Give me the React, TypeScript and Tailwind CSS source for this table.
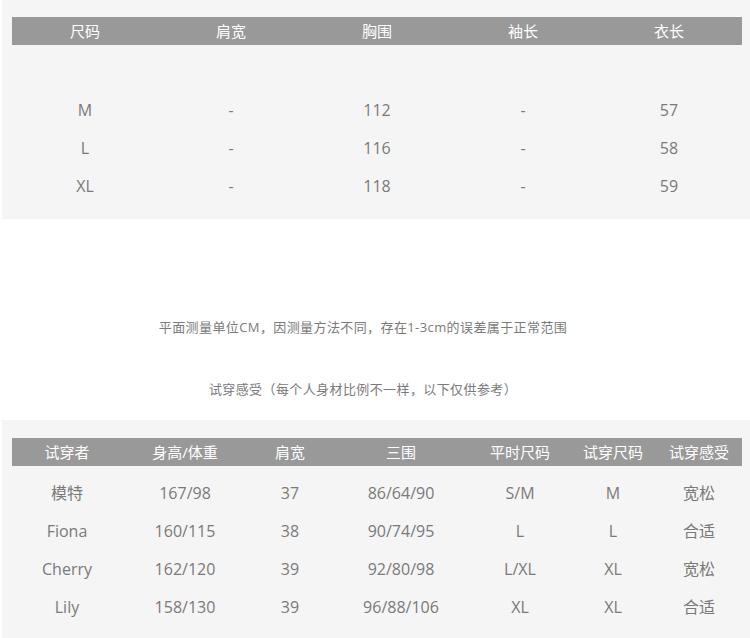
import React from 'react';

const sizeHead = ['尺码', '肩宽', '胸围', '袖长', '衣长'];
const sizeRows = [
  ['M', '-', '112', '-', '57'],
  ['L', '-', '116', '-', '58'],
  ['XL', '-', '118', '-', '59'],
];

const tryHead = ['试穿者', '身高/体重', '肩宽', '三围', '平时尺码', '试穿尺码', '试穿感受'];
const tryRows = [
  ['模特', '167/98', '37', '86/64/90', 'S/M', 'M', '宽松'],
  ['Fiona', '160/115', '38', '90/74/95', 'L', 'L', '合适'],
  ['Cherry', '162/120', '39', '92/80/98', 'L/XL', 'XL', '宽松'],
  ['Lily', '158/130', '39', '96/88/106', 'XL', 'XL', '合适'],
];

const tryCols = 'grid grid-cols-[110px_126px_84px_138px_100px_86px_86px]';

const App: React.FC = () => {
  return (
    <div className="w-[750px] h-[638px] overflow-hidden bg-white font-['Open_Sans','Noto_Sans_CJK_SC',sans-serif]">
      {/* size chart */}
      <div className="ml-[2px] bg-[#f5f5f5] pl-[10px] pr-[8px] pt-[17px] pb-[14px]">
        <div className="grid grid-cols-5 h-[28px] bg-[#999999] text-white text-[15px] items-center text-center">
          {sizeHead.map((h) => (
            <div key={h}>{h}</div>
          ))}
        </div>
        <div className="h-[46px]" />
        {sizeRows.map((row, i) => (
          <div key={i} className="grid grid-cols-5 h-[38px] items-center text-center text-[16px] text-[#7a7a7a]">
            {row.map((c, j) => (
              <div key={j}>{c}</div>
            ))}
          </div>
        ))}
      </div>

      {/* notes */}
      <div className="h-[201px] flex flex-col items-center pr-[24px] text-[13px] tracking-[0.4px] text-[#7a7a7a]">
        <p className="mt-[99px]">平面测量单位CM，因测量方法不同，存在1-3cm的误差属于正常范围</p>
        <p className="mt-[42px]">试穿感受（每个人身材比例不一样，以下仅供参考）</p>
      </div>

      {/* try-on chart */}
      <div className="ml-[2px] bg-[#f5f5f5] pl-[10px] pr-[8px] pt-[18px] pb-[14px]">
        <div className={`${tryCols} h-[28px] bg-[#999999] text-white text-[15px] items-center text-center`}>
          {tryHead.map((h) => (
            <div key={h}>{h}</div>
          ))}
        </div>
        <div className="h-[8px]" />
        {tryRows.map((row, i) => (
          <div key={i} className={`${tryCols} h-[38px] items-center text-center text-[16px] text-[#7a7a7a]`}>
            {row.map((c, j) => (
              <div key={j}>{c}</div>
            ))}
          </div>
        ))}
      </div>
    </div>
  );
};

export default App;
